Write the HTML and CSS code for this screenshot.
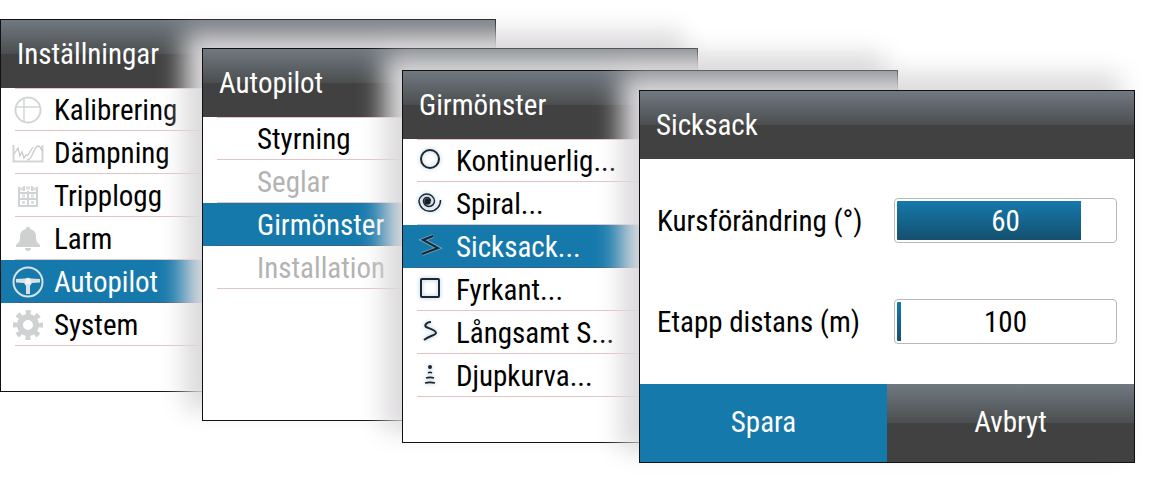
FILE: index.html
```html
<!DOCTYPE html>
<html lang="sv">
<head>
    <meta charset="UTF-8">
    <meta name="viewport" content="width=device-width, initial-scale=1.0">
    <title>Sicksack</title>
    <link rel="stylesheet" href="styles.css">
</head>
<body>
    <div class="desktop">
        <section class="panel panel-settings">
            <h2>Inställningar</h2>
            <ul class="menu">
                <li><button type="button">
                    <svg class="icon" viewBox="0 0 32 32" fill="none" stroke="#d3d6d6" stroke-width="2">
                        <circle cx="16" cy="16" r="12.5"/>
                        <path d="M12 5v22M4 13h24" stroke-width="1.5"/>
                    </svg>
                    Kalibrering</button></li>
                <li><button type="button">
                    <svg class="icon" viewBox="0 0 32 32" fill="none" stroke="#c9cccc" stroke-width="1.3">
                        <path d="M1.500 8v16.500h29V8" stroke="#d3d5d5" stroke-width="2"/>
                        <path d="M2 17l2-3 2-3 2 8 2-4 2 6 2-3h2l5-8M15 23c6 0 6-13 11-14 2 0 3 2 4 5"/>
                    </svg>
                    Dämpning</button></li>
                <li><button type="button">
                    <svg class="icon" viewBox="0 0 32 32" fill="none" stroke="#d0d3d3" stroke-width="2">
                        <path d="M7 7v19h18V7M12 6v5M20 6v5M7 13h18M7 19h18M16 11v15"/>
                        <path d="M10 16h3M19 16h3M10 22.500h3M19 22.500h3M8 9h3M14 8h4M21 9h3" stroke="#dcdfdf" stroke-width="3"/>
                    </svg>
                    Tripplogg</button></li>
                <li><button type="button">
                    <svg class="icon" viewBox="0 0 32 32" fill="#cfd1d1">
                        <path d="M16 4c1.500 0 2 .5 2 2 4 1 6 4 6 7 0 6 1 6 4 9v2H4v-2c3-3 4-3 4-9 0-3 2-6 6-7 0-1.500.5-2 2-2zM13 25h6c0 2-1 3-3 3s-3-1-3-3z"/>
                    </svg>
                    Larm</button></li>
                <li><button type="button" class="selected">
                    <svg class="icon" viewBox="0 0 32 32">
                        <circle cx="16" cy="16" r="14.500" fill="none" stroke="#d8e2e6" stroke-width="2"/>
                        <path fill="#d8e2e6" d="M4 13l9-.5c2-1 4-1 6 0l9 .5v3.500l-8 .5-2 3v8h-4v-8l-2-3-8-.5z"/>
                        <circle cx="16" cy="15.500" r="3" fill="#eff3f4"/>
                    </svg>
                    Autopilot</button></li>
                <li><button type="button">
                    <svg class="icon" viewBox="0 0 32 32" fill="none" stroke="#cfd2d2">
                        <circle cx="16" cy="16" r="8" stroke-width="6"/>
                        <circle cx="16" cy="16" r="12.500" stroke-width="5" stroke-dasharray="4.900 4.900" stroke-dashoffset="2.450"/>
                    </svg>
                    System</button></li>
            </ul>
        </section>

        <section class="panel panel-autopilot">
            <h2>Autopilot</h2>
            <ul class="menu">
                <li><button type="button">Styrning</button></li>
                <li><button type="button" disabled>Seglar</button></li>
                <li><button type="button" class="selected">Girmönster</button></li>
                <li><button type="button" disabled>Installation</button></li>
            </ul>
        </section>

        <section class="panel panel-pattern">
            <h2>Girmönster</h2>
            <ul class="menu">
                <li><button type="button">
                    <svg class="icon glow" viewBox="0 0 32 32" fill="none" stroke="#20262b" stroke-width="2">
                        <circle cx="16" cy="14" r="9"/>
                    </svg>
                    Kontinuerlig...</button></li>
                <li><button type="button">
                    <svg class="icon glow" viewBox="0 0 32 32" fill="none" stroke="#20262b" stroke-width="1.500">
                        <path d="M26.500 12A10.700 10.700 0 0 1 5 13A7.800 7.800 0 0 1 20.500 13A5.500 5.500 0 0 1 9.500 13A3.500 3.500 0 0 1 16.500 13"/>
                        <circle cx="13.500" cy="13.500" r="2.500" fill="#15191d"/>
                    </svg>
                    Spiral...</button></li>
                <li><button type="button" class="selected">
                    <svg class="icon" viewBox="0 0 32 32" fill="none" stroke="#1a262e" stroke-width="2">
                        <path d="M19 5l-10 4 15 8-16 6" stroke="#6ba4c4" stroke-width="4"/>
                        <path d="M19 5l-10 4 15 8-16 6"/>
                    </svg>
                    Sicksack...</button></li>
                <li><button type="button">
                    <svg class="icon glow" viewBox="0 0 32 32" fill="none" stroke="#20262b" stroke-width="2">
                        <rect x="7" y="5" width="18" height="18" rx="1"/>
                    </svg>
                    Fyrkant...</button></li>
                <li><button type="button">
                    <svg class="icon glow" viewBox="0 0 32 32" fill="none" stroke="#20262b" stroke-width="2">
                        <path d="M17 5c-4 0-7 3-5 5 2 1 10 3 10 6 0 2-7 3-12 7"/>
                    </svg>
                    Långsamt S...</button></li>
                <li><button type="button">
                    <svg class="icon glow" viewBox="0 0 32 32" fill="none" stroke="#20262b" stroke-width="1.600">
                        <circle cx="16" cy="7" r="2" fill="#20262b" stroke="none"/>
                        <path d="M14 13c1-.7 3-.7 4 0M12 18c3-1 5-1 8 0M11 23c4-1 6-1 10 0"/>
                    </svg>
                    Djupkurva...</button></li>
            </ul>
        </section>

        <form class="panel panel-zigzag">
            <h2>Sicksack</h2>
            <div class="fields">
                <label for="course">Kursförändring (°)</label>
                <input type="text" id="course" class="bar-light" value="60" style="--fill: 85%">
                <label for="leg">Etapp distans (m)</label>
                <input type="text" id="leg" value="100" style="--fill: 2%">
            </div>
            <div class="actions">
                <button type="submit" class="save">Spara</button>
                <button type="button">Avbryt</button>
            </div>
        </form>
    </div>
</body>
</html>
```
FILE: styles.css
```css
* {
    box-sizing: border-box;
}
body {
    margin: 0;
    background-color: #fff;
    color: #000;
    font-family: "Roboto Condensed", "Liberation Sans Narrow", sans-serif;
    font-size: 29px;
    line-height: 42px;
}
button, input {
    font: inherit;
    color: inherit;
}
.desktop {
    position: relative;
    min-height: 492px;
    overflow: hidden;
}
.panel {
    position: absolute;
    display: flex;
    flex-direction: column;
    width: 496px;
    min-height: 373px;
    background-color: #fff;
    border: 1px solid #111;
    box-shadow: -16px -14px 24px 2px rgb(220, 218, 220);
}
.panel-settings {
    left: 0;
    top: 19px;
    box-shadow: none;
}
.panel-autopilot {
    left: 202px;
    top: 48px;
}
.panel-pattern {
    left: 402px;
    top: 70px;
}
.panel-zigzag {
    left: 639px;
    top: 90px;
}
h2 {
    margin: 0;
    padding: 13px 16px;
    font-size: inherit;
    font-weight: normal;
    color: #fff;
    background: linear-gradient(#717981, #4b4e4f 50%, #414141 50%);
}

/* menu rows */
.menu {
    margin: 0;
    padding: 0;
    list-style: none;
    background: linear-gradient(#e3c3c9, #e3c3c9) 14px 0 / 100% 1px no-repeat;
}
.menu button {
    display: flex;
    align-items: center;
    gap: 10px;
    width: 100%;
    height: 43px;
    padding: 0 0 0 54px;
    border: none;
    text-align: left;
    background: linear-gradient(#e3c3c9, #e3c3c9) 14px 100% / 100% 1px no-repeat;
}
.menu button:has(.icon) {
    padding-left: 11px;
}
.menu button:disabled {
    color: #b3b3b3;
}
.menu .selected {
    color: #fff;
    background: #1579ac linear-gradient(#3d5f8a, #3d5f8a) 14px 100% / 100% 1px no-repeat;
}
.icon {
    flex: none;
    width: 32px;
    height: 32px;
}
.glow {
    filter: drop-shadow(0 0 2px #9cc4e4);
}

/* value fields */
.fields {
    display: grid;
    grid-template-columns: 1fr 223px;
    row-gap: 56px;
    align-items: center;
    padding: 39px 17px;
}
.fields input {
    width: 100%;
    height: 45px;
    padding: 2px;
    border: 1px solid #b3babf;
    border-radius: 4px;
    text-align: center;
    background: linear-gradient(#1579ac, #14506e) content-box no-repeat;
    background-size: var(--fill) 100%;
}
.fields .bar-light {
    color: #fff;
}

.actions {
    display: flex;
    margin-top: auto;
}
.actions button {
    flex: 1;
    height: 78px;
    padding: 0 0 2px;
    border: none;
    color: #fff;
    background: linear-gradient(#717981, #4b4e4f 50%, #414141 50%);
}
.actions .save {
    background: #1579ac;
}
```
